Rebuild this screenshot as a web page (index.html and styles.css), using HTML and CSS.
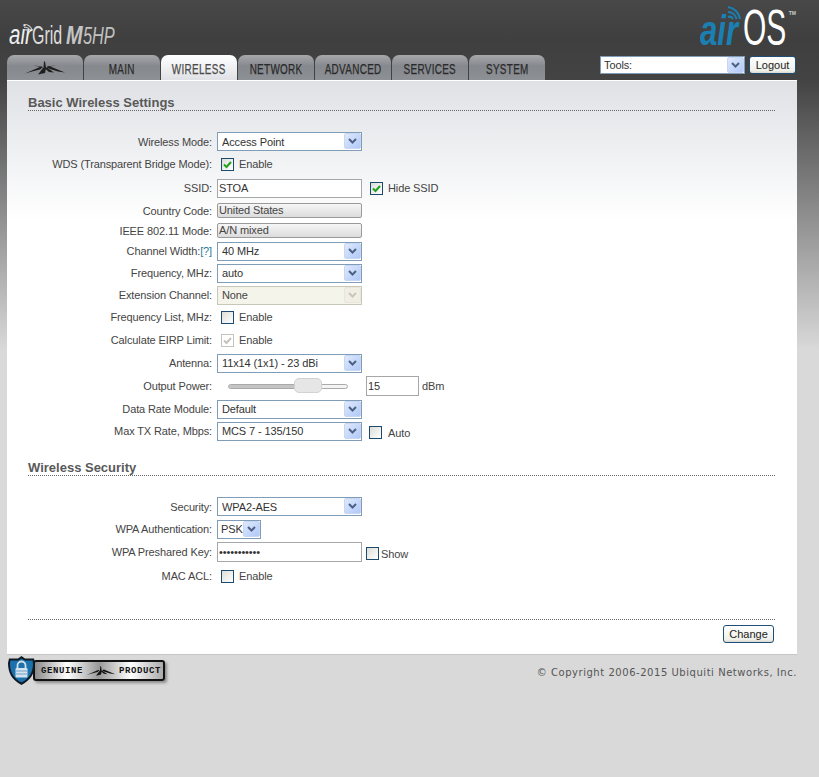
FILE: index.html
```html
<!DOCTYPE html>
<html lang="en">
<head>
<meta charset="utf-8">
<title>airOS - Wireless</title>
<link rel="stylesheet" href="styles.css">
</head>
<body>
<div class="page">
  <header class="top">
    <div class="product"><span class="p-air">air</span><span class="p-grid">Grid</span><span class="p-m">M</span><span class="p-model">5HP</span>
      <svg class="p-waves" width="10" height="11" viewBox="0 0 10 11"><g fill="none" stroke="#c9c9c9" stroke-width="1.1"><path d="M1 9.500a2.500 2.500 0 0 1 3.500 0"/><path d="M1 6.500a5.500 5.500 0 0 1 6 2.600"/><path d="M1 3.500a8.500 8.500 0 0 1 8 5"/></g></svg>
    </div>
    <div class="airos"><span class="a-air">air</span><span class="a-os">OS</span><span class="a-tm">TM</span>
      <svg class="a-waves" width="14" height="16" viewBox="0 0 14 16"><g fill="none" stroke="#1a80b4" stroke-width="2"><path d="M1 13a4 4 0 0 1 5 2"/><path d="M1 8a9 9 0 0 1 8.500 7"/><path d="M1 3a14 14 0 0 1 12 12"/></g></svg>
    </div>
  </header>
  <nav class="nav">
    <div class="tabs">
      <a class="tab tab-logo"><svg width="40" height="14" viewBox="0 0 40 14"><g fill="#1f1f1f"><path d="M0 12.500 16 5.500 18 6 15 8.500 7 10.500Z"/><path d="M40 11.500 24 5 21.500 6 25 8 33 10.500Z"/><path d="M19 0.500 20 0.500 21 7 18.500 7Z"/><path d="M18 7 21 7 20 12 13 13.500Z"/><path d="M19.500 7 22 6.500 29 11.500 24 11Z"/><path d="M8 4 17 6 17 6.700Z"/><path d="M31 4 22 6 22 6.700Z"/></g></svg></a>
      <a class="tab"><span>MAIN</span></a>
      <a class="tab active"><span>WIRELESS</span></a>
      <a class="tab"><span>NETWORK</span></a>
      <a class="tab"><span>ADVANCED</span></a>
      <a class="tab"><span>SERVICES</span></a>
      <a class="tab"><span>SYSTEM</span></a>
    </div>
    <div class="tools">
      <div class="sel sel-tools">
        <select><option>Tools:</option></select>
        <svg class="arrow" width="17" height="16" viewBox="0 0 17 16"><use href="#chev"/></svg>
      </div>
      <button class="btn" type="button">Logout</button>
    </div>
  </nav>

  <svg class="defs" width="0" height="0" aria-hidden="true"><defs>
    <linearGradient id="ag" x1="0" y1="0" x2="1" y2="1"><stop offset="0" stop-color="#e1eafe"/><stop offset="1" stop-color="#aec8f7"/></linearGradient>
    <g id="chev"><rect x="0.500" y="0.500" width="16" height="15" rx="1.500" fill="url(#ag)" stroke="#c8d6f2"/><path d="M5 6l3.500 3.500L12 6" fill="none" stroke="#4d6185" stroke-width="2"/></g>
    <g id="chevd"><rect x="0.500" y="0.500" width="16" height="15" rx="1.500" fill="#f1efe5" stroke="#e8e6da"/><path d="M5 6l3.500 3.500L12 6" fill="none" stroke="#c9c7ba" stroke-width="2"/></g>
  </defs></svg>

  <main class="panel">
    <h2 class="head">Basic Wireless Settings</h2>
    <form class="form">
      <div class="row r-first">
        <label class="lbl">Wireless Mode:</label>
        <div class="sel"><select><option>Access Point</option></select><svg class="arrow" width="17" height="16" viewBox="0 0 17 16"><use href="#chev"/></svg></div>
      </div>
      <div class="row r-24">
        <label class="lbl">WDS (Transparent Bridge Mode):</label>
        <span class="cb cb-ind on"><svg width="11" height="11" viewBox="0 0 11 11"><path d="M2 5.500l2.500 2.500L9 3" fill="none" stroke="#21a121" stroke-width="2"/></svg></span><span class="cb-text">Enable</span>
      </div>
      <div class="row r-24">
        <label class="lbl">SSID:</label>
        <input class="txt" type="text" value="STOA">
        <span class="cb cb-side on"><svg width="11" height="11" viewBox="0 0 11 11"><path d="M2 5.500l2.500 2.500L9 3" fill="none" stroke="#21a121" stroke-width="2"/></svg></span><span class="cb-text">Hide SSID</span>
      </div>
      <div class="row r-21">
        <label class="lbl">Country Code:</label>
        <button class="grey" type="button">United States</button>
      </div>
      <div class="row r-19">
        <label class="lbl">IEEE 802.11 Mode:</label>
        <button class="grey" type="button">A/N mixed</button>
      </div>
      <div class="row r-22">
        <label class="lbl">Channel Width:<a class="help">[?]</a></label>
        <div class="sel"><select><option>40 MHz</option></select><svg class="arrow" width="17" height="16" viewBox="0 0 17 16"><use href="#chev"/></svg></div>
      </div>
      <div class="row r-22">
        <label class="lbl">Frequency, MHz:</label>
        <div class="sel"><select><option>auto</option></select><svg class="arrow" width="17" height="16" viewBox="0 0 17 16"><use href="#chev"/></svg></div>
      </div>
      <div class="row r-22">
        <label class="lbl">Extension Channel:</label>
        <div class="sel disabled"><select disabled><option>None</option></select><svg class="arrow" width="17" height="16" viewBox="0 0 17 16"><use href="#chevd"/></svg></div>
      </div>
      <div class="row r-22">
        <label class="lbl">Frequency List, MHz:</label>
        <span class="cb cb-ind"></span><span class="cb-text">Enable</span>
      </div>
      <div class="row r-24">
        <label class="lbl">Calculate EIRP Limit:</label>
        <span class="cb cb-ind off"><svg width="11" height="11" viewBox="0 0 11 11"><path d="M2 5.500l2.500 2.500L9 3" fill="none" stroke="#c4c4bc" stroke-width="2"/></svg></span><span class="cb-text">Enable</span>
      </div>
      <div class="row r-22">
        <label class="lbl">Antenna:</label>
        <div class="sel"><select><option>11x14 (1x1) - 23 dBi</option></select><svg class="arrow" width="17" height="16" viewBox="0 0 17 16"><use href="#chev"/></svg></div>
      </div>
      <div class="row r-24">
        <label class="lbl">Output Power:</label>
        <div class="slider"><i class="fill"></i><i class="knob"></i></div>
        <input class="txt power" type="text" value="15">
        <span class="unit">dBm</span>
      </div>
      <div class="row r-22">
        <label class="lbl">Data Rate Module:</label>
        <div class="sel"><select><option>Default</option></select><svg class="arrow" width="17" height="16" viewBox="0 0 17 16"><use href="#chev"/></svg></div>
      </div>
      <div class="row r-22">
        <label class="lbl">Max TX Rate, Mbps:</label>
        <div class="sel"><select><option>MCS 7 - 135/150</option></select><svg class="arrow" width="17" height="16" viewBox="0 0 17 16"><use href="#chev"/></svg></div>
        <div class="low"><span class="cb cb-auto"></span><span class="cb-text">Auto</span></div>
      </div>

      <h2 class="head head-2">Wireless Security</h2>

      <div class="row r-first">
        <label class="lbl">Security:</label>
        <div class="sel"><select><option>WPA2-AES</option></select><svg class="arrow" width="17" height="16" viewBox="0 0 17 16"><use href="#chev"/></svg></div>
      </div>
      <div class="row r-24">
        <label class="lbl">WPA Authentication:</label>
        <div class="sel sel-psk"><select><option>PSK</option></select><svg class="arrow" width="17" height="16" viewBox="0 0 17 16"><use href="#chev"/></svg></div>
      </div>
      <div class="row r-22">
        <label class="lbl">WPA Preshared Key:</label>
        <input class="txt pw" type="password" value="stoapasswd1">
        <div class="low"><span class="cb cb-show"></span><span class="cb-text t-show">Show</span></div>
      </div>
      <div class="row r-26">
        <label class="lbl">MAC ACL:</label>
        <span class="cb cb-ind"></span><span class="cb-text">Enable</span>
      </div>
    </form>
    <div class="actions">
      <button class="btn btn-change" type="button">Change</button>
    </div>
  </main>

  <footer class="foot">
    <div class="badge">
      <svg class="shield" width="29" height="31" viewBox="0 0 29 31">
        <path d="M14.500 1 18 3.500 27 3.500 28 8C28 18 24 25 14.500 30 5 25 1 18 1 8L2 3.500 11 3.500Z" fill="#101a22"/>
        <path d="M14.500 3.500 17.500 5.500 25.500 5.500 26 8.500C26 17 22.500 23.500 14.500 27.500 6.500 23.500 3 17 3 8.500L3.500 5.500 11.500 5.500Z" fill="#1c70ab"/>
        <path d="M10.500 13V10.500a4 4 0 0 1 8 0V13" fill="none" stroke="#cfe0ec" stroke-width="1.800"/>
        <rect x="8.500" y="13" width="12" height="9.500" rx="1" fill="#d5e3ee"/>
        <path d="M8.500 16h12M8.500 19h12" stroke="#6ea3c8" stroke-width="1"/>
      </svg>
      <div class="bar">
        <span>GENUINE</span>
        <svg width="30" height="10" viewBox="0 0 40 14"><g fill="#111"><path d="M0 12.500 16 5.500 18 6 15 8.500 7 10.500Z"/><path d="M40 11.500 24 5 21.500 6 25 8 33 10.500Z"/><path d="M19 0.500 20 0.500 21 7 18.500 7Z"/><path d="M18 7 21 7 20 12 13 13.500Z"/><path d="M19.500 7 22 6.500 29 11.500 24 11Z"/></g></svg>
        <span>PRODUCT</span>
      </div>
    </div>
    <div class="copy">© Copyright 2006-2015 Ubiquiti Networks, Inc.</div>
  </footer>
</div>
</body>
</html>
```
FILE: styles.css
```css
* { box-sizing: border-box; }
html, body { margin: 0; padding: 0; }
body {
  height: 777px;
  overflow: hidden;
  background: linear-gradient(#484848 0, #3f3f3f 40px, #434343 80px, #d9d9d9 350px);
  font: 11px "Liberation Sans", Arial, sans-serif;
  letter-spacing: -0.12px;
  color: #444;
}
.page { width: 790px; margin-left: 7px; }
.defs { position: absolute; }

/* header */
.top { height: 55px; display: flex; justify-content: space-between; align-items: flex-start; }
.product {
  position: relative; display: flex; align-items: baseline;
  margin: 22px 0 0 2px; line-height: 1; color: #e8e8e8; letter-spacing: 0;
}
.product span { display: inline-block; transform-origin: left center; white-space: nowrap; }
.p-air { width: 23px; font-size: 27px; font-style: italic; color: #f0f0f0; transform: scaleX(.76); }
.p-grid { width: 34px; font-size: 25px; color: #dcdcdc; transform: scaleX(.64); }
.p-m { width: 17px; font-size: 25px; font-style: italic; font-weight: bold; color: #c4c4c4; transform: scaleX(.8); }
.p-model { width: 33px; font-size: 24px; font-style: italic; color: #c2c2c2; transform: scaleX(.68); }
.p-waves { position: absolute; left: 14px; top: -1px; }

.airos {
  position: relative; display: flex; align-items: baseline;
  margin: 3px 1px 0 0; line-height: 1; color: #fff; letter-spacing: 0;
}
.airos span { display: inline-block; transform-origin: left center; white-space: nowrap; }
.a-air { width: 43px; font-size: 42px; font-style: italic; font-weight: bold; color: #1a80b4; transform: scaleX(.74); }
.a-os { width: 46px; font-size: 50px; transform: scaleX(.6); }
.a-tm { font-size: 5px; font-weight: bold; align-self: flex-start; margin-top: 8px; color: #ccc; }
.a-waves { position: absolute; left: 27px; top: 1px; }

/* nav */
.nav { height: 25px; display: flex; justify-content: space-between; }
.tabs { display: flex; gap: 1px; }
.tab {
  width: 76px; height: 25px; display: flex; align-items: center; justify-content: center;
  border-radius: 7px 7px 0 0;
  background: linear-gradient(#a6a8ab, #85888d 45%, #8d9094);
  font-size: 15px; letter-spacing: 0.5px; color: #2a2a2a; padding-top: 1px;
}
.tab span { display: block; white-space: nowrap; transform: scaleX(.66); -webkit-text-stroke: 0.25px currentColor; }
.tab.active { background: linear-gradient(#fff, #dfe1e5); color: #4a4a4a; }
.tools { display: flex; gap: 4px; height: 19px; margin-top: 1px; padding-right: 1px; }
.btn {
  width: 47px; height: 18px; padding: 0; font: 11px "Liberation Sans", Arial, sans-serif; color: #222;
  border: 1px solid #1f4f78; border-radius: 3px;
  background: linear-gradient(#fff, #f0f0ea 85%, #d8d6cc);
}

/* panel */
.panel {
  height: 575px; padding: 15px 22px 0 21px;
  border-top: 1px solid #fff; border-bottom: 1px solid #c6c6c6;
  background: linear-gradient(#dfe1e5 0, #fff 140px);
}
.head {
  margin: 0; height: 15px; border-bottom: 1px dotted #666;
  font: bold 13px/13px "Liberation Sans", Arial, sans-serif; letter-spacing: 0; color: #595959;
}
.head-2 { margin-top: 19px; }
.form { display: block; }
.row { display: flex; align-items: center; height: 22px; color: #444; }
.r-first { margin: 21px 0 1px; height: 19px; }
.r-19 { height: 19px; }
.r-21 { height: 21px; }
.r-22 { height: 22px; }
.r-24 { height: 24px; }
.r-26 { height: 26px; }
.low { display: flex; align-items: center; padding-top: 3px; }
.lbl { width: 184px; margin-right: 5px; text-align: right; white-space: nowrap; }
.help { color: #2a7a9a; }

.sel { position: relative; width: 145px; height: 19px; flex: none; }
.sel select {
  appearance: none; -webkit-appearance: none; display: block;
  width: 100%; height: 100%; padding: 0 0 0 4px; margin: 0; border-radius: 0;
  border: 1px solid #7f9db9; background: #fff; color: #333;
  font: 11px "Liberation Sans", Arial, sans-serif; letter-spacing: -0.12px;
}
.sel .arrow { position: absolute; right: 1px; top: 1px; }
.sel.disabled select { background: #f5f4ea; border-color: #c9c7ba; color: #444; opacity: 1; }
.sel-psk { width: 44px; }
.sel-psk select { padding-left: 3px; }
.sel-tools { width: 145px; height: 18px; }
.sel-tools select { padding-left: 3px; }
.txt {
  display: block; flex: none; width: 145px; height: 19px; padding: 0 1px; margin: 0;
  border: 1px solid #a5a7ab; background: #fff; color: #333; border-radius: 0;
  font: 11px "Liberation Sans", Arial, sans-serif; letter-spacing: -0.12px;
}
.pw { height: 20px; }
.grey {
  display: block; width: 145px; height: 15px; padding: 0 0 0 1px; text-align: left; flex: none;
  border: 1px solid #9a9a9a; border-radius: 2px; color: #444;
  background: linear-gradient(#f6f6f6, #dcdcdc);
  font: 11px/13px "Liberation Sans", Arial, sans-serif; letter-spacing: -0.12px;
}
.cb {
  width: 13px; height: 13px; flex: none; display: block;
  border: 1px solid #1c4a6e;
  background: linear-gradient(135deg, #dcdcd7, #fff);
}
.cb svg { display: block; }
.cb.off { border-color: #c4c4bc; background: #fff; }
.cb-ind { margin-left: 4px; }
.cb-side { margin-left: 8px; }
.cb-auto { margin-left: 7px; }
.cb-show { margin-left: 4px; }
.cb-text { margin-left: 5px; color: #444; }
.low .cb-auto + .cb-text { margin-left: 6px; }
.low .t-show { margin-left: 2px; }
.slider { position: relative; width: 120px; height: 5px; margin-left: 11px; flex: none; border: 1px solid #aaa; border-radius: 3px; background: #f4f4f4; }
.slider .fill { display: block; width: 70px; height: 3px; background: #c4c4c4; }
.slider .knob {
  position: absolute; left: 65px; top: -7px; width: 28px; height: 15px; border-radius: 5px;
  border: 1px solid #d2d2d2; background: #e6e6e6;
}
.power { width: 53px; height: 20px; margin-left: 18px; }
.unit { margin-left: 3px; }

.actions {
  margin-top: 30px; padding: 5px 1px 0 0; border-top: 1px dotted #666;
  display: flex; justify-content: flex-end;
}
.btn-change { width: 51px; height: 18px; }

/* footer */
.foot { display: flex; justify-content: space-between; align-items: flex-start; }
.badge { display: flex; align-items: center; height: 31px; }
.shield { flex: none; margin-right: -3px; position: relative; z-index: 1; }
.bar {
  width: 132px; height: 21px; display: flex; align-items: center; justify-content: center; gap: 3px;
  border: 2px solid #111; border-radius: 3px; box-shadow: 2px 2px 3px #8a8a8a;
  background: linear-gradient(90deg, #8a8a8a, #fff 25%, #999 50%, #fff 75%, #aaa);
  font: bold 9px "Liberation Mono", monospace; letter-spacing: 0.6px; color: #111; padding-left: 4px;
}
.copy { margin-top: 12px; font: 10px "DejaVu Sans", Verdana, sans-serif; letter-spacing: 0.54px; color: #555; white-space: nowrap; }
```
